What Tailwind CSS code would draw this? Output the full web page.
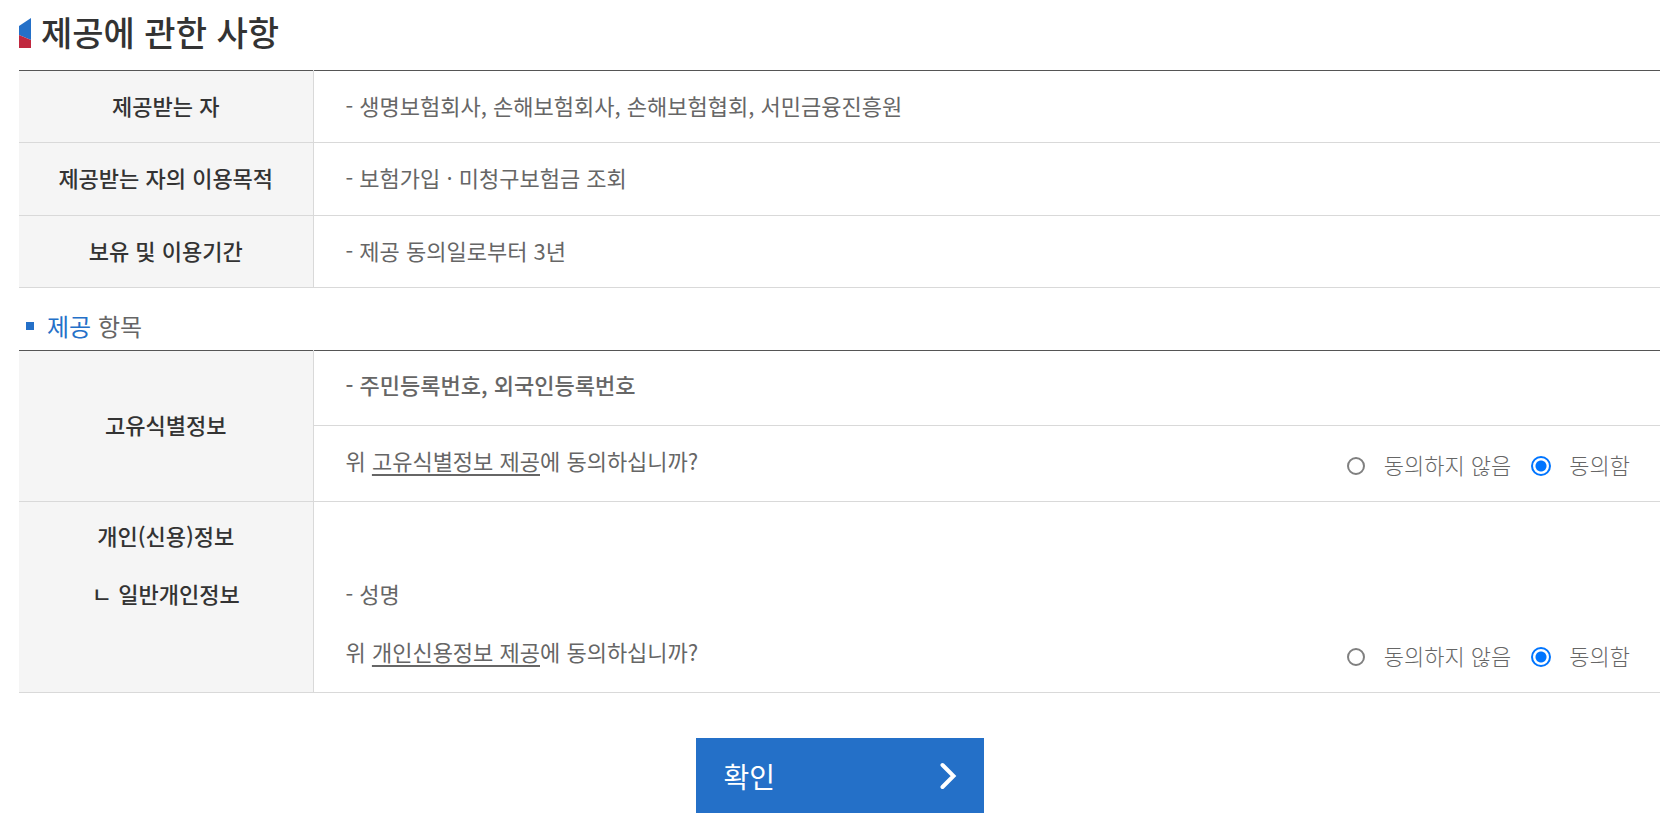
<!DOCTYPE html>
<html lang="ko">
<head>
<meta charset="utf-8">
<meta name="viewport" content="width=device-width, initial-scale=1">
<title>제공에 관한 사항</title>
<script src="https://cdn.jsdelivr.net/npm/@tailwindcss/browser@4"></script>
</head>
<body class="bg-white font-['Noto_Sans_CJK_KR',sans-serif] text-[22px] leading-8 text-[#666]">
<main class="pt-[7px] pr-[18px] pl-[19px]">
  <h1 class="flex items-center gap-[10px] text-[34px] leading-[50px] font-medium text-[#333]">
    <svg class="h-[30px] w-3 shrink-0" viewBox="0 0 12 30" aria-hidden="true">
      <path d="M0 8 12 0V22L0 17Z" fill="#2470c8"/>
      <path d="M0 17 12 22V30H0Z" fill="#c0283f"/>
    </svg>
    <span class="pb-0.5">제공에 관한 사항</span>
  </h1>

  <table class="mt-[11px] w-full table-fixed border-collapse">
    <colgroup><col class="w-[294px]"><col></colgroup>
    <tbody>
      <tr class="h-[72px] border-y border-t-[#555] border-b-[#d9d9d9]">
        <th scope="row" class="border-r border-[#d9d9d9] bg-[#f5f5f5] pb-1 font-medium text-[#333]">제공받는 자</th>
        <td class="px-8 pb-1">- 생명보험회사, 손해보험회사, 손해보험협회, 서민금융진흥원</td>
      </tr>
      <tr class="h-[73px] border-b border-[#d9d9d9]">
        <th scope="row" class="border-r border-[#d9d9d9] bg-[#f5f5f5] pb-1 font-medium text-[#333]">제공받는 자의 이용목적</th>
        <td class="px-8 pb-1">- 보험가입 · 미청구보험금 조회</td>
      </tr>
      <tr class="h-[72px] border-b border-[#d9d9d9]">
        <th scope="row" class="border-r border-[#d9d9d9] bg-[#f5f5f5] pb-1 font-medium text-[#333]">보유 및 이용기간</th>
        <td class="px-8 pb-1">- 제공 동의일로부터 3년</td>
      </tr>
    </tbody>
  </table>

  <h2 class="mt-[22px] flex items-center gap-[13px] pl-[7px] text-2xl">
    <span class="size-2 shrink-0 bg-[#2470c8]"></span>
    <span><span class="text-[#2470c8]">제공</span> 항목</span>
  </h2>

  <table class="mt-2 w-full table-fixed border-collapse">
    <colgroup><col class="w-[294px]"><col></colgroup>
    <tbody>
      <tr class="h-[75px] border-t border-[#555]">
        <th scope="row" rowspan="2" class="border-r border-b border-[#d9d9d9] bg-[#f5f5f5] pb-1 font-medium text-[#333]">고유식별정보</th>
        <td class="border-b border-[#d9d9d9] px-8 pb-2 font-medium">- 주민등록번호, 외국인등록번호</td>
      </tr>
      <tr class="h-[76px]">
        <td class="border-b border-[#d9d9d9] pr-[30px] pl-8">
          <fieldset class="flex items-start justify-between">
            <legend class="float-left">위 <span class="underline decoration-2 underline-offset-4">고유식별정보 제공</span>에 동의하십니까?</legend>
            <span class="flex items-center gap-5 pt-1 font-light">
              <label class="flex items-center gap-[18px]"><input type="radio" name="unique" class="m-px size-[18px] appearance-none rounded-full border-2 border-[#808080] checked:m-0 checked:size-5 checked:border-[#0075ff] checked:bg-[radial-gradient(circle,#0075ff_5px,white_6px)]"><span class="pb-1">동의하지 않음</span></label>
              <label class="flex items-center gap-[18px]"><input type="radio" name="unique" class="m-px size-[18px] appearance-none rounded-full border-2 border-[#808080] checked:m-0 checked:size-5 checked:border-[#0075ff] checked:bg-[radial-gradient(circle,#0075ff_5px,white_6px)]" checked><span class="pb-1">동의함</span></label>
            </span>
          </fieldset>
        </td>
      </tr>
      <tr class="h-[191px] border-b border-[#d9d9d9] align-top leading-[58px]">
        <th scope="row" class="border-r border-[#d9d9d9] bg-[#f5f5f5] pt-1 font-medium text-[#333]">
          <p>개인(신용)정보</p>
          <p>ㄴ 일반개인정보</p>
        </th>
        <td class="pt-[62px] pr-[30px] pl-8">
          <p>- 성명</p>
          <fieldset class="flex items-start justify-between">
            <legend class="float-left">위 <span class="underline decoration-2 underline-offset-4">개인신용정보 제공</span>에 동의하십니까?</legend>
            <span class="flex items-center gap-5 pt-1 font-light">
              <label class="flex items-center gap-[18px]"><input type="radio" name="credit" class="m-px size-[18px] appearance-none rounded-full border-2 border-[#808080] checked:m-0 checked:size-5 checked:border-[#0075ff] checked:bg-[radial-gradient(circle,#0075ff_5px,white_6px)]"><span class="pb-1">동의하지 않음</span></label>
              <label class="flex items-center gap-[18px]"><input type="radio" name="credit" class="m-px size-[18px] appearance-none rounded-full border-2 border-[#808080] checked:m-0 checked:size-5 checked:border-[#0075ff] checked:bg-[radial-gradient(circle,#0075ff_5px,white_6px)]" checked><span class="pb-1">동의함</span></label>
            </span>
          </fieldset>
        </td>
      </tr>
    </tbody>
  </table>

  <button type="button" class="mx-auto mt-[45px] flex h-[75px] w-72 items-center justify-between bg-[#2470c8] pr-[27px] pl-7 text-[28px] text-white">
    확인
    <svg class="h-7 w-[17px]" viewBox="0 0 17 28" fill="none" stroke="currentColor" stroke-width="4" stroke-linecap="round" stroke-linejoin="miter" aria-hidden="true"><path d="M2.500 3 13.500 14 2.500 25"/></svg>
  </button>
</main>
</body>
</html>
